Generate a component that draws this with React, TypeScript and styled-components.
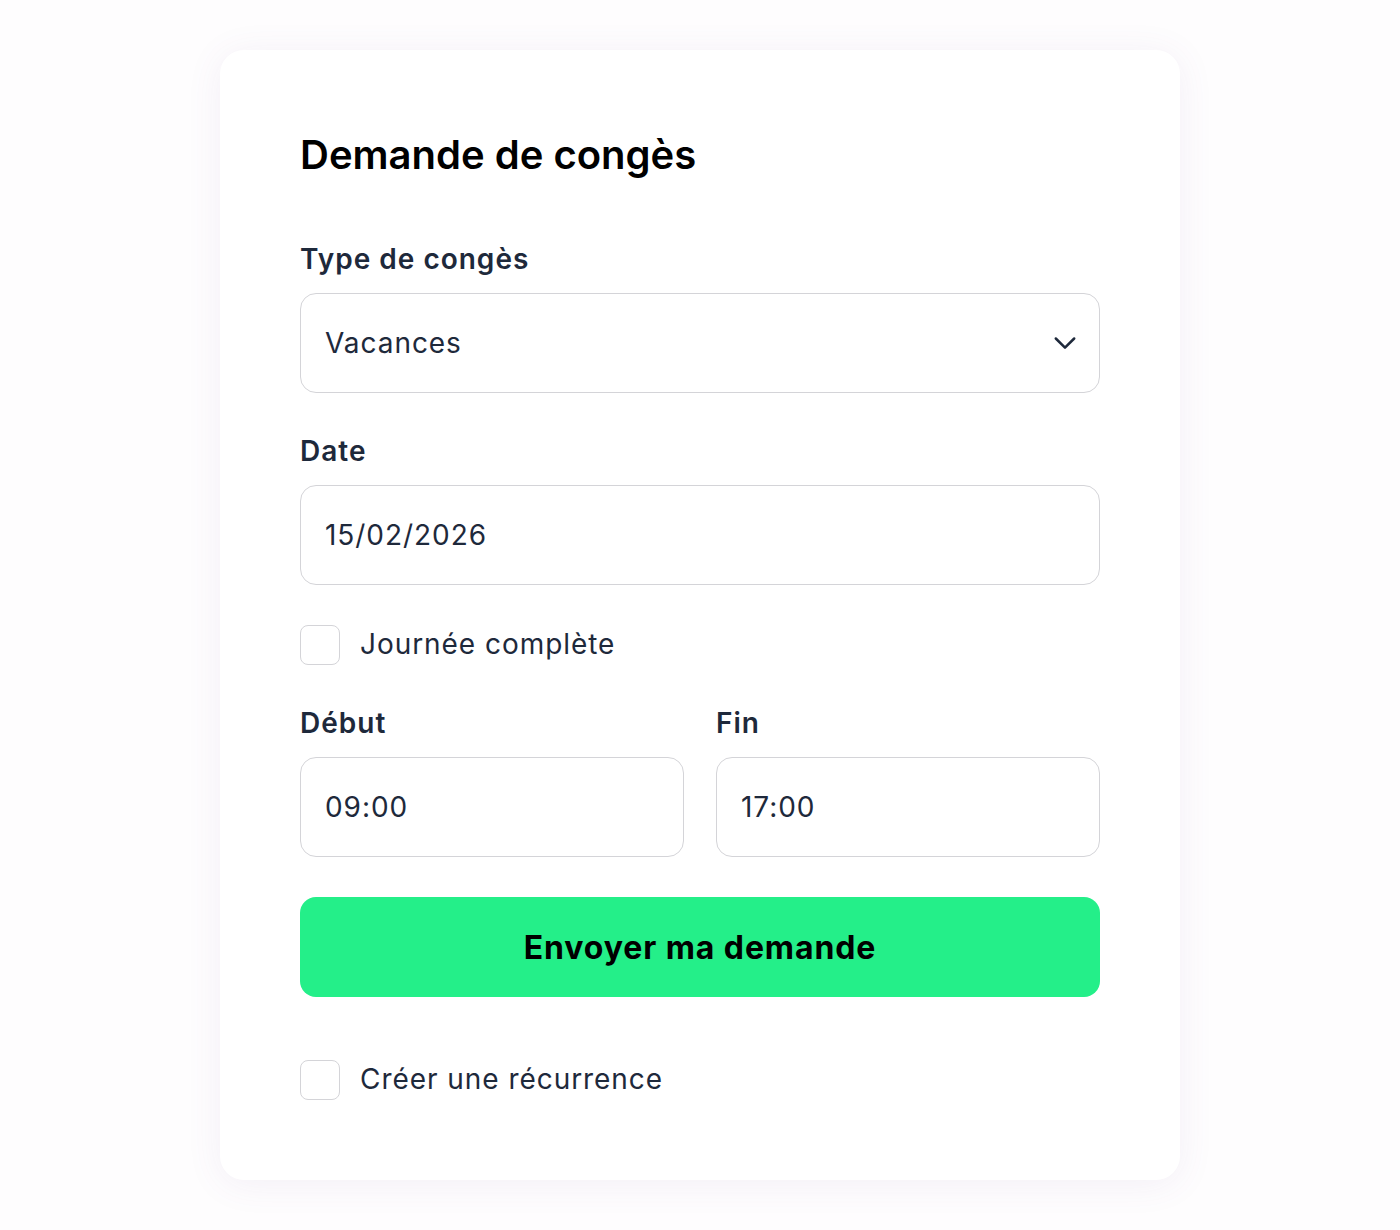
import styled, { createGlobalStyle } from "styled-components";

const GlobalStyle = createGlobalStyle`
  html, body {
    margin: 0;
    padding: 0;
    background: #fefdfe;
    font-family: Inter, "Noto Sans", sans-serif;
  }
  * { box-sizing: border-box; }
`;

const Page = styled.div`
  min-height: 1230px;
  padding: 50px 0;
  display: flex;
  justify-content: center;
  align-items: flex-start;
`;

const Card = styled.form`
  width: 960px;
  background: #ffffff;
  border-radius: 24px;
  padding: 80px;
  box-shadow: 0 4px 36px rgba(110, 80, 150, 0.08);
  display: flex;
  flex-direction: column;
`;

const Title = styled.h1`
  margin: 0 0 61px;
  font-size: 40px;
  line-height: 50px;
  font-weight: 600;
  color: #000;
`;

const Field = styled.div<{ $mb?: number }>`
  display: flex;
  flex-direction: column;
  gap: 16px;
  margin-bottom: ${(p) => p.$mb ?? 40}px;
  min-width: 0;
`;

const Label = styled.label`
  font-size: 28px;
  line-height: 36px;
  font-weight: 600;
  letter-spacing: 1px;
  color: #1e293b;
`;

const Box = styled.div`
  height: 100px;
  border: 1px solid #d4d4d8;
  border-radius: 16px;
  padding: 0 22px 0 24px;
  display: flex;
  align-items: center;
  justify-content: space-between;
  font-size: 28px;
  letter-spacing: 0.95px;
  color: #1e293b;
  background: #fff;
`;

const Row = styled.div`
  display: grid;
  grid-template-columns: 1fr 1fr;
  gap: 32px;
  margin-bottom: 40px;
`;

const CheckRow = styled.label<{ $mb?: number }>`
  display: flex;
  align-items: center;
  gap: 20px;
  font-size: 28px;
  line-height: 34px;
  letter-spacing: 0.95px;
  color: #1e293b;
  margin-bottom: ${(p) => p.$mb ?? 0}px;
`;

const CheckText = styled.span`
  margin-top: -3px;
`;

const Check = styled.span`
  width: 40px;
  height: 40px;
  border: 1px solid #d4d4d8;
  border-radius: 8px;
  background: #fff;
  flex-shrink: 0;
`;

const Submit = styled.button`
  height: 100px;
  border: none;
  border-radius: 16px;
  background: #24ef89;
  color: #000;
  font-family: Inter, "Noto Sans", sans-serif;
  font-size: 32px;
  font-weight: 700;
  letter-spacing: 0.9px;
  margin-bottom: 63px;
  cursor: pointer;
`;

const Chevron = () => (
  <svg width="24" height="24" viewBox="0 0 24 24" fill="none" stroke="#1e293b" strokeWidth="2.5" strokeLinecap="round" strokeLinejoin="round">
    <path d="M2.8 7.5l9.2 9.2 9.2-9.2" />
  </svg>
);

export default function App() {
  return (
    <>
      <GlobalStyle />
      <Page>
        <Card onSubmit={(e) => e.preventDefault()}>
          <Title>Demande de congès</Title>
          <Field>
            <Label>Type de congès</Label>
            <Box>
              Vacances
              <Chevron />
            </Box>
          </Field>
          <Field>
            <Label>Date</Label>
            <Box>15/02/2026</Box>
          </Field>
          <CheckRow $mb={40}>
            <Check />
            <CheckText>Journée complète</CheckText>
          </CheckRow>
          <Row>
            <Field $mb={0}>
              <Label>Début</Label>
              <Box>09:00</Box>
            </Field>
            <Field $mb={0}>
              <Label>Fin</Label>
              <Box>17:00</Box>
            </Field>
          </Row>
          <Submit type="submit">Envoyer ma demande</Submit>
          <CheckRow>
            <Check />
            <CheckText>Créer une récurrence</CheckText>
          </CheckRow>
        </Card>
      </Page>
    </>
  );
}
